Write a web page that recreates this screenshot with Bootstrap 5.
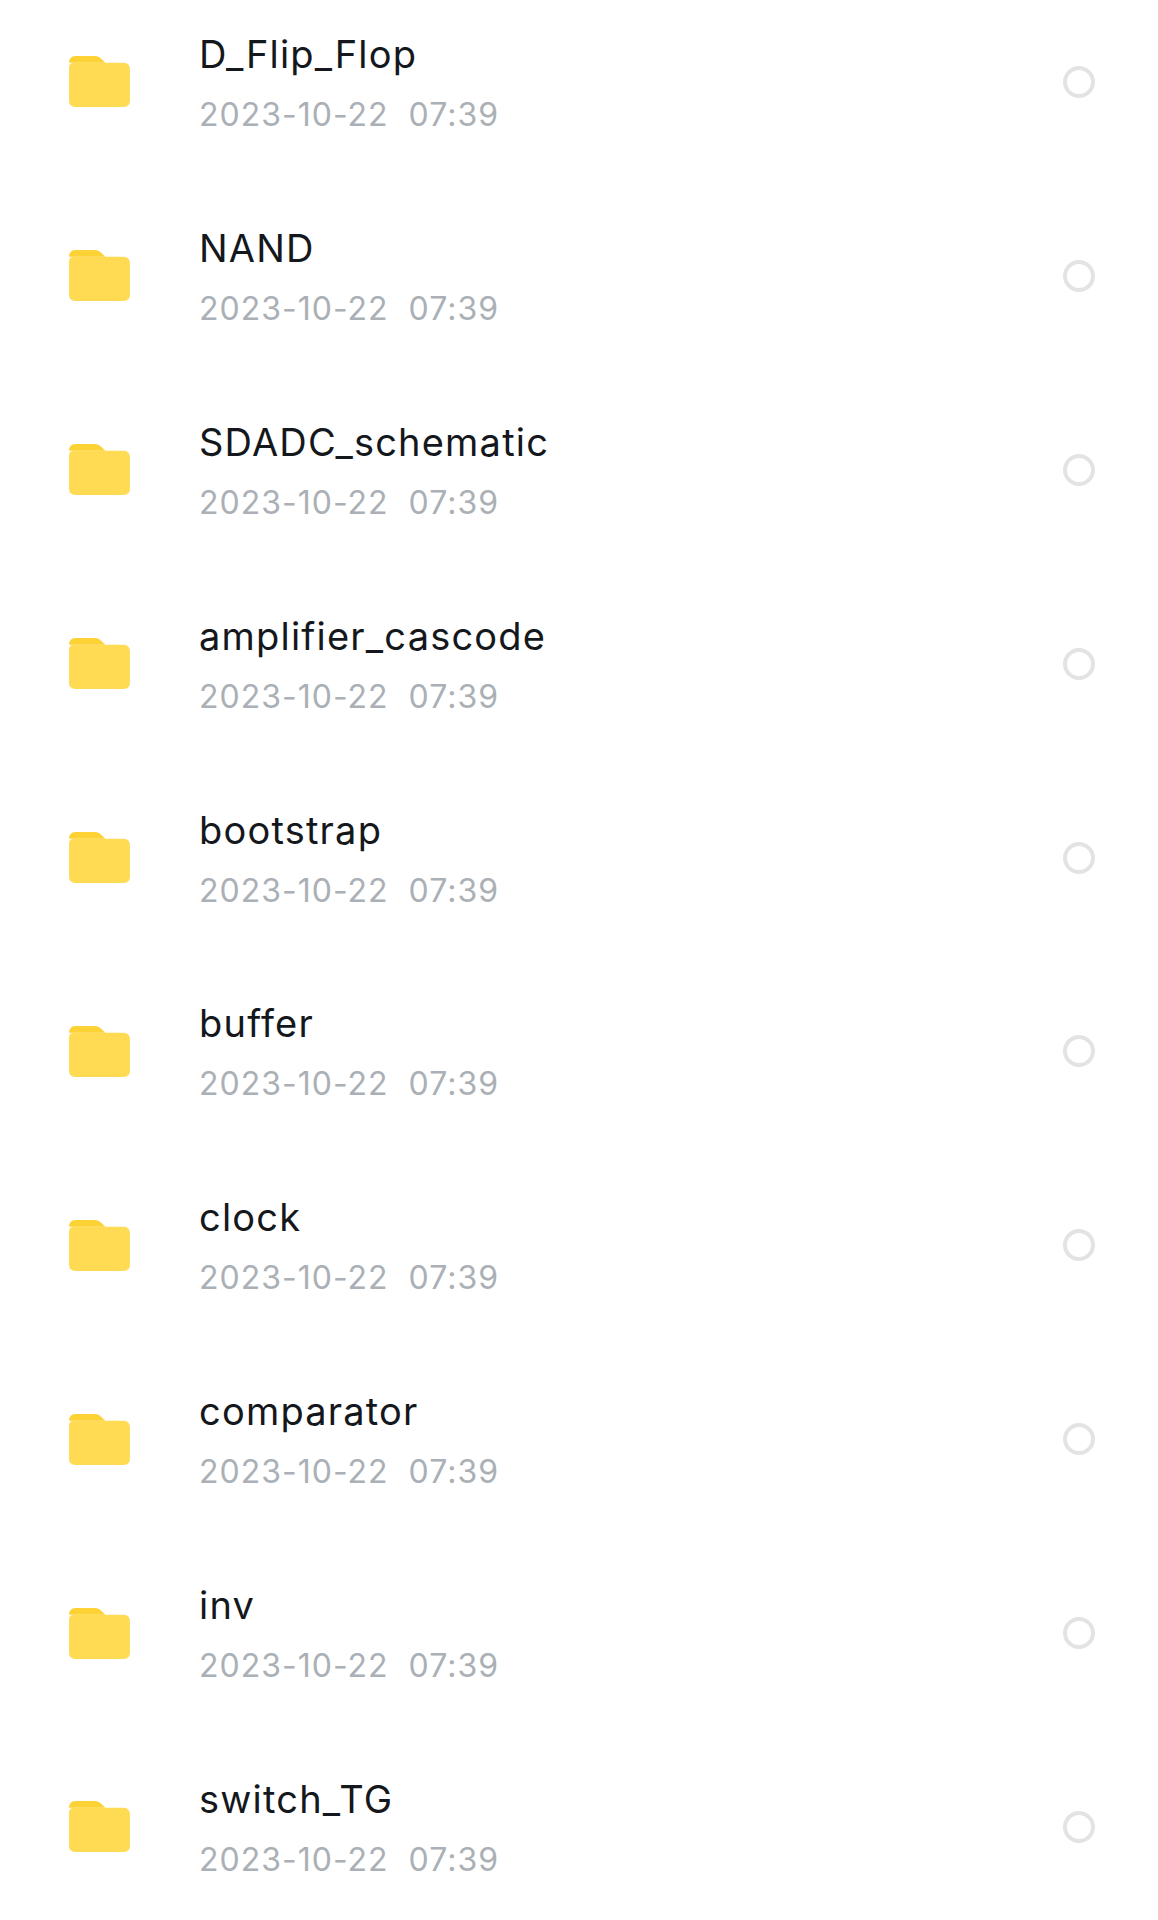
<!DOCTYPE html>
<html lang="en">
<head>
<meta charset="utf-8">
<title>Files</title>
<link rel="stylesheet" href="https://cdn.jsdelivr.net/npm/bootstrap@5.3.0/dist/css/bootstrap.min.css">
<style>
html, body { height: 1920px; overflow: hidden; background: #fff; }
.file-list { margin-top: -15px; font-family: Inter, sans-serif; }
.file-row { height: 193.9px; padding-left: 69px; padding-right: 63px; border: 0; }
.folder-ico { width: 61px; height: 53px; flex: none; margin-right: 69px; }
.file-name { font-size: 38px; line-height: 46px; letter-spacing: 1.2px; color: #14181c; margin-bottom: 15px; margin-top: 5px; }
.file-date { font-size: 32px; line-height: 46px; letter-spacing: 1px; color: #aab0b5; }
.pick-ring { width: 32px; height: 32px; flex: none; border: 4px solid #e3e3e3; border-radius: 50%; }
</style>
</head>
<body>
<div class="list-group list-group-flush file-list">
<div class="list-group-item d-flex align-items-center file-row"><svg class="folder-ico" viewBox="0 0 62 54"><path fill="#fdd235" d="M6 1h20c3 0 5 1 7 3l4 4H0V7a6 6 0 0 1 6-6z"/><path fill="#fedb52" d="M0 12a5 5 0 0 1 5-4h51a6 6 0 0 1 6 6v33a6 6 0 0 1-6 6H6a6 6 0 0 1-6-6z"/></svg><div class="flex-grow-1"><div class="file-name">D_Flip_Flop</div><div class="file-date">2023-10-22&nbsp; 07:39</div></div><span class="pick-ring"></span></div>
<div class="list-group-item d-flex align-items-center file-row"><svg class="folder-ico" viewBox="0 0 62 54"><path fill="#fdd235" d="M6 1h20c3 0 5 1 7 3l4 4H0V7a6 6 0 0 1 6-6z"/><path fill="#fedb52" d="M0 12a5 5 0 0 1 5-4h51a6 6 0 0 1 6 6v33a6 6 0 0 1-6 6H6a6 6 0 0 1-6-6z"/></svg><div class="flex-grow-1"><div class="file-name">NAND</div><div class="file-date">2023-10-22&nbsp; 07:39</div></div><span class="pick-ring"></span></div>
<div class="list-group-item d-flex align-items-center file-row"><svg class="folder-ico" viewBox="0 0 62 54"><path fill="#fdd235" d="M6 1h20c3 0 5 1 7 3l4 4H0V7a6 6 0 0 1 6-6z"/><path fill="#fedb52" d="M0 12a5 5 0 0 1 5-4h51a6 6 0 0 1 6 6v33a6 6 0 0 1-6 6H6a6 6 0 0 1-6-6z"/></svg><div class="flex-grow-1"><div class="file-name">SDADC_schematic</div><div class="file-date">2023-10-22&nbsp; 07:39</div></div><span class="pick-ring"></span></div>
<div class="list-group-item d-flex align-items-center file-row"><svg class="folder-ico" viewBox="0 0 62 54"><path fill="#fdd235" d="M6 1h20c3 0 5 1 7 3l4 4H0V7a6 6 0 0 1 6-6z"/><path fill="#fedb52" d="M0 12a5 5 0 0 1 5-4h51a6 6 0 0 1 6 6v33a6 6 0 0 1-6 6H6a6 6 0 0 1-6-6z"/></svg><div class="flex-grow-1"><div class="file-name">amplifier_cascode</div><div class="file-date">2023-10-22&nbsp; 07:39</div></div><span class="pick-ring"></span></div>
<div class="list-group-item d-flex align-items-center file-row"><svg class="folder-ico" viewBox="0 0 62 54"><path fill="#fdd235" d="M6 1h20c3 0 5 1 7 3l4 4H0V7a6 6 0 0 1 6-6z"/><path fill="#fedb52" d="M0 12a5 5 0 0 1 5-4h51a6 6 0 0 1 6 6v33a6 6 0 0 1-6 6H6a6 6 0 0 1-6-6z"/></svg><div class="flex-grow-1"><div class="file-name">bootstrap</div><div class="file-date">2023-10-22&nbsp; 07:39</div></div><span class="pick-ring"></span></div>
<div class="list-group-item d-flex align-items-center file-row"><svg class="folder-ico" viewBox="0 0 62 54"><path fill="#fdd235" d="M6 1h20c3 0 5 1 7 3l4 4H0V7a6 6 0 0 1 6-6z"/><path fill="#fedb52" d="M0 12a5 5 0 0 1 5-4h51a6 6 0 0 1 6 6v33a6 6 0 0 1-6 6H6a6 6 0 0 1-6-6z"/></svg><div class="flex-grow-1"><div class="file-name">buffer</div><div class="file-date">2023-10-22&nbsp; 07:39</div></div><span class="pick-ring"></span></div>
<div class="list-group-item d-flex align-items-center file-row"><svg class="folder-ico" viewBox="0 0 62 54"><path fill="#fdd235" d="M6 1h20c3 0 5 1 7 3l4 4H0V7a6 6 0 0 1 6-6z"/><path fill="#fedb52" d="M0 12a5 5 0 0 1 5-4h51a6 6 0 0 1 6 6v33a6 6 0 0 1-6 6H6a6 6 0 0 1-6-6z"/></svg><div class="flex-grow-1"><div class="file-name">clock</div><div class="file-date">2023-10-22&nbsp; 07:39</div></div><span class="pick-ring"></span></div>
<div class="list-group-item d-flex align-items-center file-row"><svg class="folder-ico" viewBox="0 0 62 54"><path fill="#fdd235" d="M6 1h20c3 0 5 1 7 3l4 4H0V7a6 6 0 0 1 6-6z"/><path fill="#fedb52" d="M0 12a5 5 0 0 1 5-4h51a6 6 0 0 1 6 6v33a6 6 0 0 1-6 6H6a6 6 0 0 1-6-6z"/></svg><div class="flex-grow-1"><div class="file-name">comparator</div><div class="file-date">2023-10-22&nbsp; 07:39</div></div><span class="pick-ring"></span></div>
<div class="list-group-item d-flex align-items-center file-row"><svg class="folder-ico" viewBox="0 0 62 54"><path fill="#fdd235" d="M6 1h20c3 0 5 1 7 3l4 4H0V7a6 6 0 0 1 6-6z"/><path fill="#fedb52" d="M0 12a5 5 0 0 1 5-4h51a6 6 0 0 1 6 6v33a6 6 0 0 1-6 6H6a6 6 0 0 1-6-6z"/></svg><div class="flex-grow-1"><div class="file-name">inv</div><div class="file-date">2023-10-22&nbsp; 07:39</div></div><span class="pick-ring"></span></div>
<div class="list-group-item d-flex align-items-center file-row"><svg class="folder-ico" viewBox="0 0 62 54"><path fill="#fdd235" d="M6 1h20c3 0 5 1 7 3l4 4H0V7a6 6 0 0 1 6-6z"/><path fill="#fedb52" d="M0 12a5 5 0 0 1 5-4h51a6 6 0 0 1 6 6v33a6 6 0 0 1-6 6H6a6 6 0 0 1-6-6z"/></svg><div class="flex-grow-1"><div class="file-name">switch_TG</div><div class="file-date">2023-10-22&nbsp; 07:39</div></div><span class="pick-ring"></span></div>
</div>
<script src="https://cdn.jsdelivr.net/npm/bootstrap@5.3.0/dist/js/bootstrap.bundle.min.js"></script>
</body>
</html>
